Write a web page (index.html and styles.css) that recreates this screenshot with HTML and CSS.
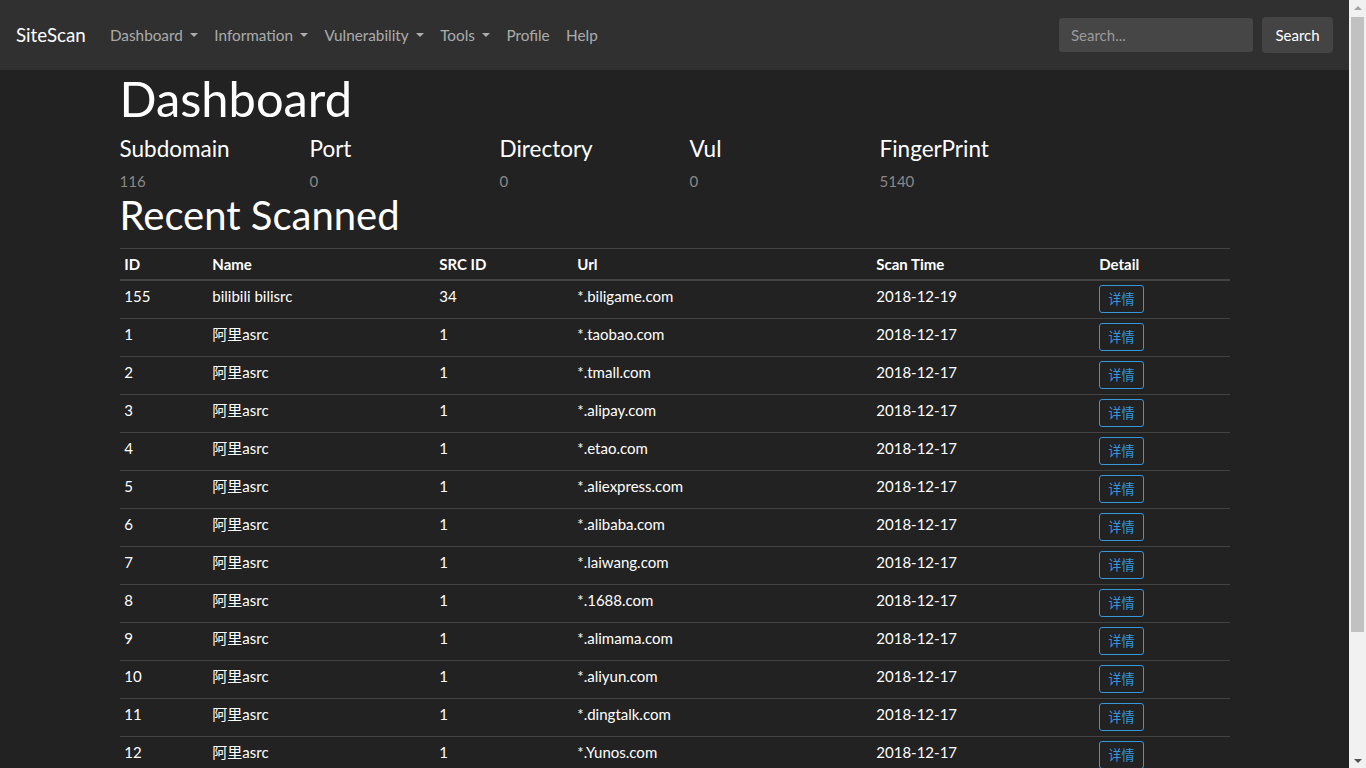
FILE: index.html
```html
<!DOCTYPE html>
<html lang="zh">
<head>
<meta charset="utf-8">
<title>SiteScan - Dashboard</title>
<link rel="stylesheet" href="styles.css">
</head>
<body>
<div class="page">
  <nav class="navbar">
    <a class="brand" href="#">SiteScan</a>
    <ul class="nav">
      <li><a class="nav-link caret" href="#">Dashboard</a></li>
      <li><a class="nav-link caret" href="#">Information</a></li>
      <li><a class="nav-link caret" href="#">Vulnerability</a></li>
      <li><a class="nav-link caret" href="#">Tools</a></li>
      <li><a class="nav-link" href="#">Profile</a></li>
      <li><a class="nav-link" href="#">Help</a></li>
    </ul>
    <form class="search">
      <input class="search-input" type="text" placeholder="Search...">
      <button class="search-btn" type="button">Search</button>
    </form>
  </nav>
  <main class="container">
    <h1 class="title">Dashboard</h1>
    <div class="stats">
      <div class="stat"><h4 class="stat-name">Subdomain</h4><p class="stat-value">116</p></div>
      <div class="stat"><h4 class="stat-name">Port</h4><p class="stat-value">0</p></div>
      <div class="stat"><h4 class="stat-name">Directory</h4><p class="stat-value">0</p></div>
      <div class="stat"><h4 class="stat-name">Vul</h4><p class="stat-value">0</p></div>
      <div class="stat"><h4 class="stat-name">FingerPrint</h4><p class="stat-value">5140</p></div>
    </div>
    <h2 class="subtitle">Recent Scanned</h2>
    <table class="table">
      <colgroup>
        <col class="c-id"><col class="c-name"><col class="c-src"><col class="c-url"><col class="c-time"><col class="c-detail">
      </colgroup>
      <thead>
        <tr><th>ID</th><th>Name</th><th>SRC ID</th><th>Url</th><th>Scan Time</th><th>Detail</th></tr>
      </thead>
      <tbody>
        <tr><td>155</td><td>bilibili bilisrc</td><td>34</td><td>*.biligame.com</td><td>2018-12-19</td><td><a class="btn-detail" href="#">详情</a></td></tr>
        <tr><td>1</td><td>阿里asrc</td><td>1</td><td>*.taobao.com</td><td>2018-12-17</td><td><a class="btn-detail" href="#">详情</a></td></tr>
        <tr><td>2</td><td>阿里asrc</td><td>1</td><td>*.tmall.com</td><td>2018-12-17</td><td><a class="btn-detail" href="#">详情</a></td></tr>
        <tr><td>3</td><td>阿里asrc</td><td>1</td><td>*.alipay.com</td><td>2018-12-17</td><td><a class="btn-detail" href="#">详情</a></td></tr>
        <tr><td>4</td><td>阿里asrc</td><td>1</td><td>*.etao.com</td><td>2018-12-17</td><td><a class="btn-detail" href="#">详情</a></td></tr>
        <tr><td>5</td><td>阿里asrc</td><td>1</td><td>*.aliexpress.com</td><td>2018-12-17</td><td><a class="btn-detail" href="#">详情</a></td></tr>
        <tr><td>6</td><td>阿里asrc</td><td>1</td><td>*.alibaba.com</td><td>2018-12-17</td><td><a class="btn-detail" href="#">详情</a></td></tr>
        <tr><td>7</td><td>阿里asrc</td><td>1</td><td>*.laiwang.com</td><td>2018-12-17</td><td><a class="btn-detail" href="#">详情</a></td></tr>
        <tr><td>8</td><td>阿里asrc</td><td>1</td><td>*.1688.com</td><td>2018-12-17</td><td><a class="btn-detail" href="#">详情</a></td></tr>
        <tr><td>9</td><td>阿里asrc</td><td>1</td><td>*.alimama.com</td><td>2018-12-17</td><td><a class="btn-detail" href="#">详情</a></td></tr>
        <tr><td>10</td><td>阿里asrc</td><td>1</td><td>*.aliyun.com</td><td>2018-12-17</td><td><a class="btn-detail" href="#">详情</a></td></tr>
        <tr><td>11</td><td>阿里asrc</td><td>1</td><td>*.dingtalk.com</td><td>2018-12-17</td><td><a class="btn-detail" href="#">详情</a></td></tr>
        <tr><td>12</td><td>阿里asrc</td><td>1</td><td>*.Yunos.com</td><td>2018-12-17</td><td><a class="btn-detail" href="#">详情</a></td></tr>
      </tbody>
    </table>
  </main>
</div>
<div class="scrollbar" aria-hidden="true">
  <div class="sb-btn"><span class="sb-arrow-up"></span></div>
  <div class="sb-track"><div class="sb-thumb"></div></div>
  <div class="sb-btn"><span class="sb-arrow-down"></span></div>
</div>
</body>
</html>
```

FILE: styles.css
```css
* { box-sizing: border-box; }

html, body {
  margin: 0;
  padding: 0;
}

body {
  display: flex;
  height: 100vh;
  overflow: hidden;
  background: #222222;
  color: #ffffff;
  font-family: Lato, "Noto Sans CJK SC", sans-serif;
  font-size: 15px;
  line-height: 1.5;
}

a { text-decoration: none; }

.page {
  flex: 1;
  min-width: 0;
  height: 100vh;
  overflow: hidden;
}

/* ---------- fake browser scrollbar ---------- */
.scrollbar {
  width: 17px;
  flex: none;
  display: flex;
  flex-direction: column;
  background: #f1f1f1;
}

.sb-btn {
  height: 17px;
  flex: none;
  display: flex;
  align-items: center;
  justify-content: center;
}

.sb-arrow-up {
  width: 0;
  height: 0;
  border-left: 4px solid transparent;
  border-right: 4px solid transparent;
  border-bottom: 4px solid #a3a3a3;
  margin-top: -2px;
}

.sb-arrow-down {
  width: 0;
  height: 0;
  border-left: 4px solid transparent;
  border-right: 4px solid transparent;
  border-top: 4px solid #505050;
  margin-top: 2px;
}

.sb-track {
  flex: 1;
  padding: 0 2px;
}

.sb-thumb {
  height: 615px;
  background: #c1c1c1;
}

/* ---------- navbar ---------- */
.navbar {
  display: flex;
  align-items: center;
  background: #303030;
  padding: 16px;
  height: 70px;
}

.brand {
  color: #ffffff;
  font-size: 18.75px;
  line-height: 28px;
  padding: 5px 0;
  margin-right: 16px;
}

.nav {
  display: flex;
  list-style: none;
  margin: 0;
  padding: 0;
  flex: 1;
}

.nav-link {
  display: block;
  color: rgba(255, 255, 255, 0.6);
  padding: 8px 8.2px;
  font-size: 15.3px;
  line-height: 22.5px;
}

.caret::after {
  content: "";
  display: inline-block;
  margin-left: 0.465em;
  vertical-align: 0.255em;
  border-top: 0.3em solid;
  border-right: 0.3em solid transparent;
  border-left: 0.3em solid transparent;
}

.search {
  display: flex;
  align-items: center;
}

.search-input {
  width: 194px;
  height: 34px;
  margin-right: 9px;
  padding: 6px 12px;
  background: #464646;
  border: none;
  border-radius: 3px;
  color: #ffffff;
  font-family: Lato, sans-serif;
  font-size: 15px;
}

.search-input::placeholder { color: #9a9a9a; }

.search-btn {
  height: 36px;
  padding: 0 12px;
  width: 71px;
  background: #444444;
  border: none;
  border-radius: 4px;
  color: #ffffff;
  font-family: Lato, sans-serif;
  font-size: 15px;
}

/* ---------- content ---------- */
.container {
  width: 1140px;
  margin: 0 auto;
  padding: 0 15px 12px;
}

.title {
  font-size: 48.8px;
  font-weight: 400;
  line-height: 57.6px;
  margin: 0 0 7px;
}

.stats {
  display: flex;
  margin: 0 -15px;
}

.stat {
  width: 190px;
  padding: 0 15px;
}

.stat-name {
  font-size: 22.5px;
  font-weight: 400;
  line-height: 27px;
  margin: 0 0 9.5px;
}

.stat-value {
  margin: 0;
  color: #888888;
  line-height: 20px;
}

.subtitle {
  font-size: 40px;
  font-weight: 400;
  line-height: 48px;
  margin: 0 0 8.5px;
}

/* ---------- table ---------- */
.table {
  width: 100%;
  border-collapse: collapse;
  table-layout: fixed;
  margin-bottom: 16px;
}

.c-id { width: 88px; }
.c-name { width: 227px; }
.c-src { width: 138px; }
.c-url { width: 299px; }
.c-time { width: 223px; }
.c-detail { width: 135px; }

.table th,
.table td {
  text-align: left;
  vertical-align: top;
  border-top: 1px solid #444444;
  line-height: 22.5px;
}

.table td {
  padding: 4px 4.8px 5px;
}

.table th {
  font-weight: 700;
  padding: 4px 4.8px;
}

.table thead th {
  border-bottom: 2px solid #444444;
}

.btn-detail {
  display: inline-block;
  height: 28px;
  padding: 0 8px;
  border: 1px solid #3498db;
  border-radius: 3px;
  color: #3498db;
  font-size: 13.125px;
  line-height: 26px;
}
```
